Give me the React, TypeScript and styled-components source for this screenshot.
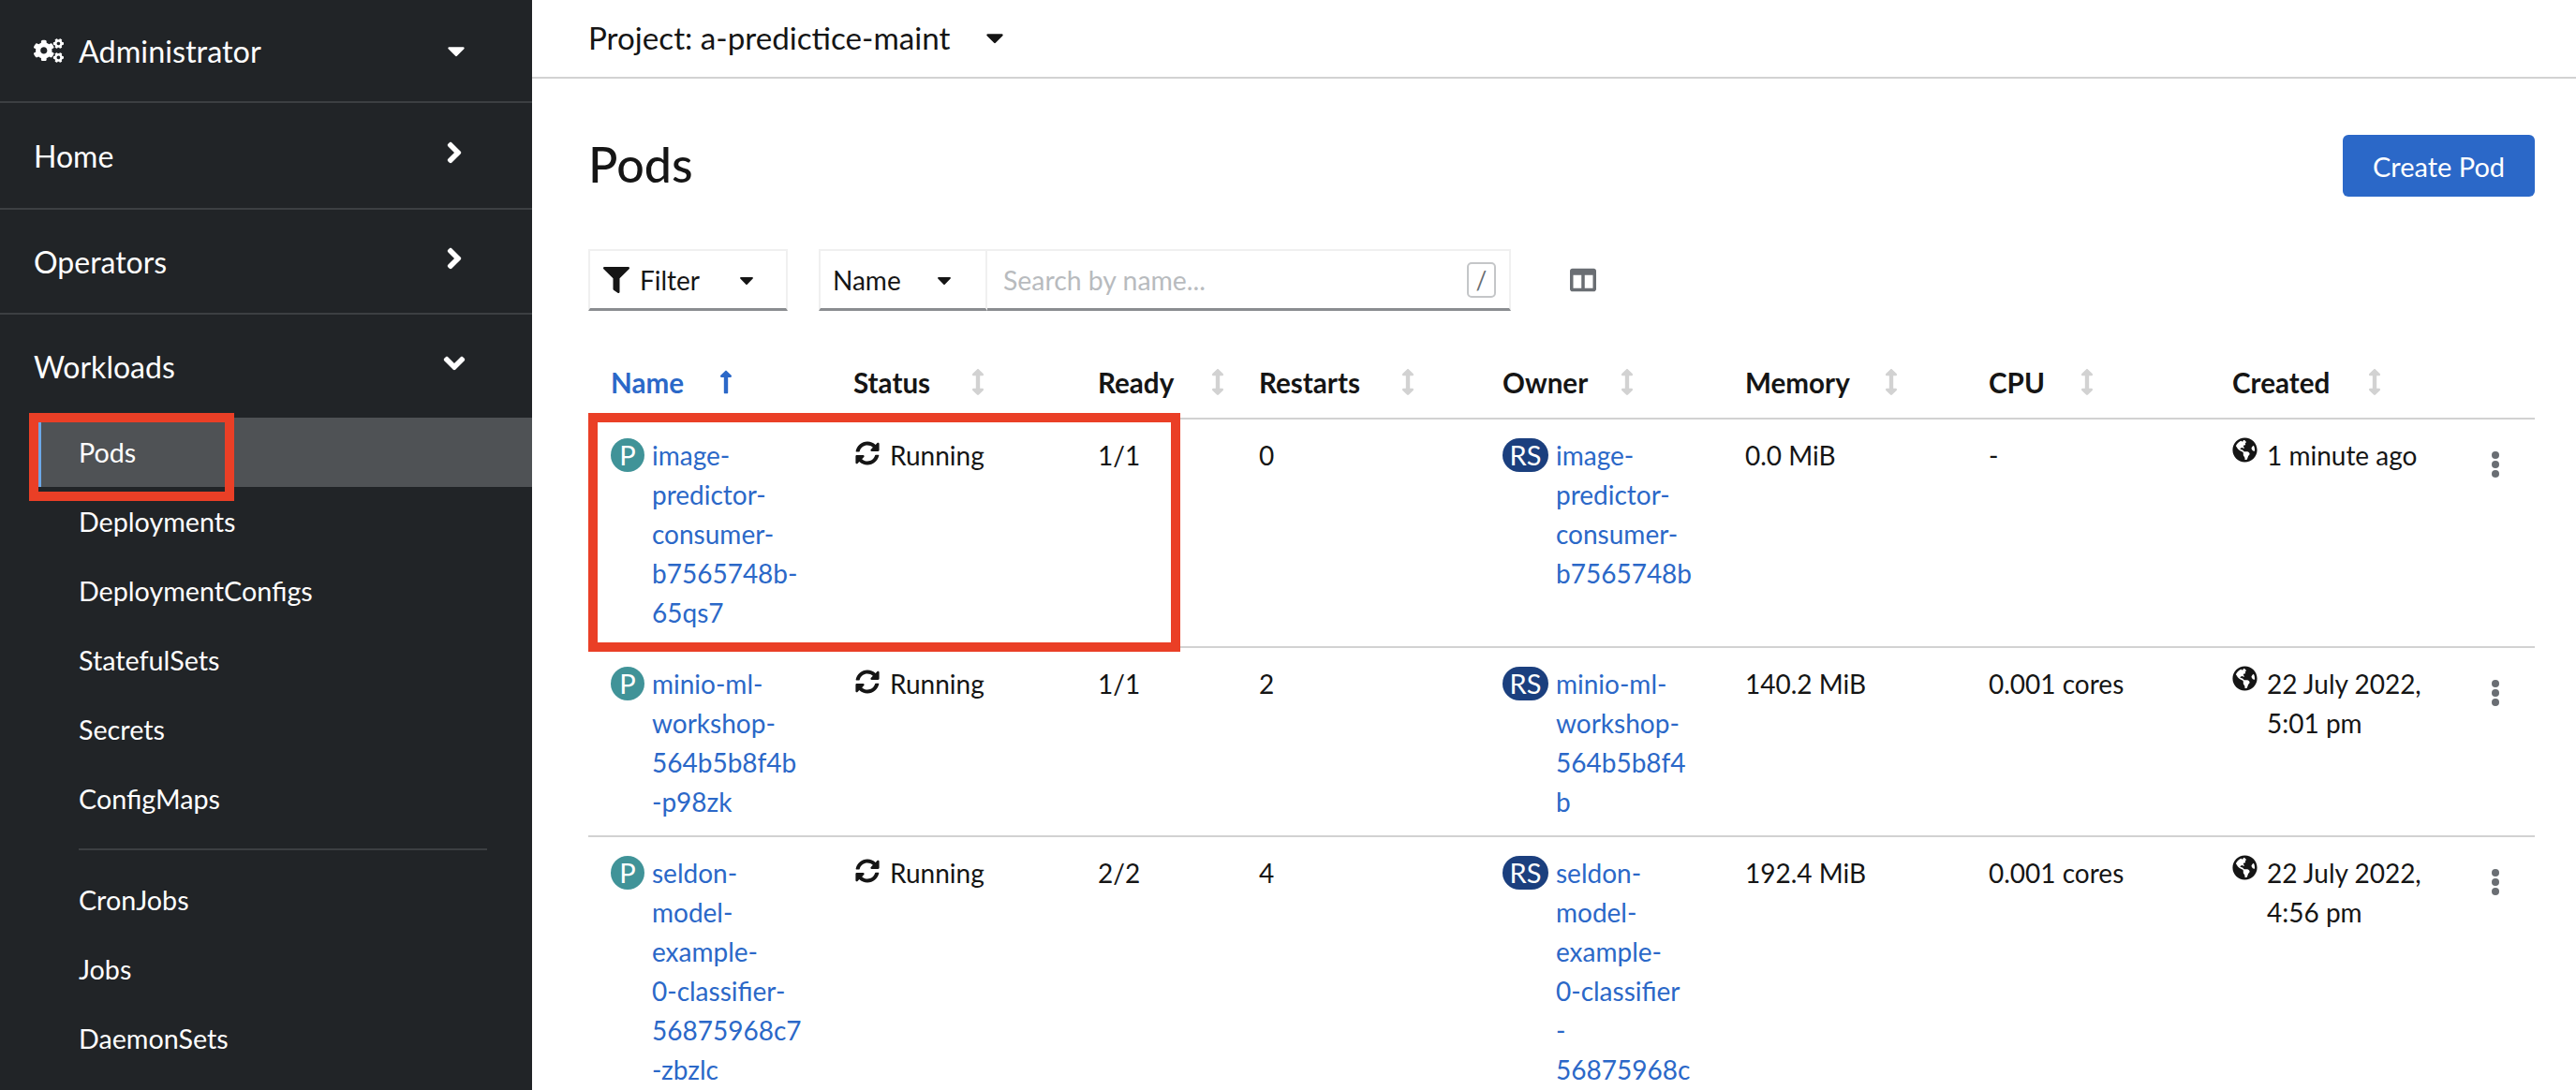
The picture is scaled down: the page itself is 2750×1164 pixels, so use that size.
import React from "react";
import styled, { createGlobalStyle } from "styled-components";
import {
  FaCogs, FaCaretDown, FaAngleRight, FaAngleDown, FaFilter, FaColumns,
  FaArrowsAltV, FaLongArrowAltUp, FaSyncAlt, FaGlobeAmericas,
} from "react-icons/fa";

const Global = createGlobalStyle`
  html, body { margin: 0; padding: 0; background: #fff; }
  body { font-family: "Lato", "Liberation Sans", sans-serif; color: #151515; }
  * { box-sizing: border-box; }
`;

const Page = styled.div`
  position: relative;
  width: 2750px;
  height: 1164px;
  overflow: hidden;
  display: flex;
`;

const Sidebar = styled.nav`
  width: 568px;
  flex: none;
  background: #212427;
  color: #fff;
  font-size: 32px;
`;

const NavTop = styled.div<{ $h: number }>`
  height: ${(p) => p.$h}px;
  display: flex;
  align-items: center;
  justify-content: space-between;
  padding: 0 71px 0 36px;
  border-bottom: 2px solid #3c3f42;
`;

const NavPlain = styled(NavTop)`
  border-bottom: none;
`;

const AdminLabel = styled.span`
  display: flex;
  align-items: center;
  gap: 16px;
  font-size: 32.4px;
`;

const ChevronBox = styled.span`
  display: flex;
  width: 24px;
  justify-content: center;
  margin-top: -6px;
  font-size: 36px;
`;

const CaretBox = styled.span`
  display: flex;
  width: 24px;
  justify-content: center;
  margin-right: -2px;
  font-size: 30px;
`;

const SubList = styled.div`
  display: flex;
  flex-direction: column;
`;

const SubItem = styled.div<{ $active?: boolean }>`
  height: 74px;
  margin-left: 41px;
  padding-left: 40px;
  display: flex;
  align-items: center;
  font-size: 28.7px;
  background: ${(p) => (p.$active ? "#4f5255" : "transparent")};
  border-left: 3px solid ${(p) => (p.$active ? "#6ca8e8" : "transparent")};
`;

const SubDivider = styled.div`
  height: 2px;
  margin: 16px 48px 16px 84px;
  background: #3c3f42;
`;

const Main = styled.main`
  flex: 1;
  min-width: 0;
`;

const ProjectBar = styled.header`
  height: 84px;
  border-bottom: 2px solid #d2d2d2;
  padding: 0 0 2px 60px;
  display: flex;
  align-items: center;
  gap: 33px;
  font-size: 33.2px;
`;

const ProjectCaret = styled.span`
  display: flex;
  font-size: 30px;
`;

const Content = styled.div`
  padding: 0 44px 0 60px;
`;

const TitleRow = styled.div`
  height: 66px;
  margin-top: 60px;
  display: flex;
  align-items: center;
  justify-content: space-between;
`;

const Title = styled.h1`
  margin: -4px 0 0;
  font-size: 52px;
  font-weight: 500;
`;

const CreateButton = styled.button`
  width: 205px;
  height: 66px;
  border: none;
  border-radius: 6px;
  background: #2b68c8;
  color: #fff;
  font: inherit;
  font-size: 29px;
`;

const Toolbar = styled.div`
  margin-top: 56px;
  display: flex;
  align-items: center;
`;

const FieldBox = styled.div<{ $w: number; $noLeft?: boolean }>`
  width: ${(p) => p.$w}px;
  height: 66px;
  display: flex;
  align-items: center;
  font-size: 28px;
  border: 2px solid #f0f0f0;
  border-bottom: 3px solid #8a8d90;
  ${(p) => (p.$noLeft ? "border-left: none;" : "")}
`;

const FilterBox = styled(FieldBox)`
  padding-left: 14px;
  margin-right: 33px;
`;

const FilterLabel = styled.span`
  margin-left: 11px;
  width: 102px;
`;

const NameLabel = styled.span`
  margin-left: 13px;
  width: 107px;
`;

const SmallCaret = styled.span`
  display: flex;
  font-size: 24px;
`;

const SearchBox = styled(FieldBox)`
  padding: 0 14px 0 17px;
  justify-content: space-between;
  font-size: 28.4px;
`;

const Placeholder = styled.span`
  color: #b8bbbe;
`;

const SlashKey = styled.span`
  width: 31px;
  height: 38px;
  border: 2px solid #c4c6c8;
  border-radius: 5px;
  display: flex;
  align-items: center;
  justify-content: center;
  color: #6a6e73;
  font-size: 26px;
`;

const ColumnsIcon = styled.span`
  display: flex;
  margin-left: 63px;
  color: #6a6e73;
  font-size: 28px;
`;

const Grid = styled.div`
  display: grid;
  grid-template-columns: 259px 261px 172px 260px 259px 260px 260px 260px 1fr;
  padding-left: 24px;
`;

const HeaderRow = styled(Grid)`
  margin-top: 42px;
  height: 74px;
  border-bottom: 2px solid #d2d2d2;
  align-items: center;
  padding-bottom: 4px;
  font-size: 29.6px;
  font-weight: 700;
`;

const HeaderCell = styled.div<{ $active?: boolean }>`
  display: flex;
  align-items: center;
  color: ${(p) => (p.$active ? "#2b68c8" : "#151515")};
`;

const HeaderLabel = styled.span<{ $w: number }>`
  width: ${(p) => p.$w}px;
`;

const SortIcon = styled.span<{ $active?: boolean }>`
  display: flex;
  color: ${(p) => (p.$active ? "#2b68c8" : "#d2d2d2")};
  font-size: 28px;
`;

const Row = styled(Grid)`
  padding-top: 17px;
  padding-bottom: 15px;
  border-bottom: 2px solid #d2d2d2;
  font-size: 28px;
  line-height: 42px;
`;

const ResourceCell = styled.div`
  display: flex;
  align-items: flex-start;
  gap: 8px;
`;

const Badge = styled.span<{ $bg: string; $wide?: boolean }>`
  flex: none;
  width: ${(p) => (p.$wide ? 49 : 36)}px;
  height: 36px;
  margin-top: 3px;
  border-radius: 18px;
  background: ${(p) => p.$bg};
  color: #fff;
  font-size: 29px;
  line-height: 36px;
  text-align: center;
`;

const LinkText = styled.a`
  color: #2b68c8;
  white-space: nowrap;
`;

const LinkLine = styled.span`
  display: block;
`;

const StatusCell = styled.div`
  display: flex;
  align-items: flex-start;
  gap: 11px;
`;

const StatusIcon = styled.span`
  display: flex;
  margin-top: 6px;
  font-size: 26px;
  padding-left: 2px;
`;

const CreatedCell = styled.div`
  display: flex;
  align-items: flex-start;
  gap: 10px;
`;

const GlobeIcon = styled.span`
  display: flex;
  margin-top: 2px;
  font-size: 27px;
`;

const CreatedText = styled.span`
  white-space: nowrap;
`;

const KebabCell = styled.div`
  display: flex;
  flex-direction: column;
  align-items: center;
  gap: 2px;
  width: 8px;
  margin: 17px 0 0 17px;
`;

const KebabDot = styled.span`
  width: 8px;
  height: 8px;
  border-radius: 50%;
  background: #6a6e73;
`;

const Callout = styled.div<{ $x: number; $y: number; $w: number; $h: number }>`
  position: absolute;
  left: ${(p) => p.$x}px;
  top: ${(p) => p.$y}px;
  width: ${(p) => p.$w}px;
  height: ${(p) => p.$h}px;
  border: 10px solid #ea3f26;
`;

const columns = [
  { label: "Name", w: 109, active: true },
  { label: "Status", w: 119 },
  { label: "Ready", w: 114 },
  { label: "Restarts", w: 145 },
  { label: "Owner", w: 119 },
  { label: "Memory", w: 142 },
  { label: "CPU", w: 91 },
  { label: "Created", w: 138 },
];

const rows = [
  {
    name: ["image-", "predictor-", "consumer-", "b7565748b-", "65qs7"],
    ready: "1/1", restarts: "0",
    owner: ["image-", "predictor-", "consumer-", "b7565748b"],
    memory: "0.0 MiB", cpu: "-", created: ["1 minute ago"],
  },
  {
    name: ["minio-ml-", "workshop-", "564b5b8f4b", "-p98zk"],
    ready: "1/1", restarts: "2",
    owner: ["minio-ml-", "workshop-", "564b5b8f4", "b"],
    memory: "140.2 MiB", cpu: "0.001 cores", created: ["22 July 2022,", "5:01 pm"],
  },
  {
    name: ["seldon-", "model-", "example-", "0-classifier-", "56875968c7", "-zbzlc"],
    ready: "2/2", restarts: "4",
    owner: ["seldon-", "model-", "example-", "0-classifier", "-", "56875968c"],
    memory: "192.4 MiB", cpu: "0.001 cores", created: ["22 July 2022,", "4:56 pm"],
  },
];

const Lines = ({ lines }: { lines: string[] }) => (
  <LinkText>
    {lines.map((l, i) => (
      <LinkLine key={i}>{l}</LinkLine>
    ))}
  </LinkText>
);

export default function App() {
  return (
    <Page>
      <Global />
      <Sidebar>
        <NavTop $h={110}>
          <AdminLabel>
            <FaCogs size={32} />
            Administrator
          </AdminLabel>
          <CaretBox><FaCaretDown /></CaretBox>
        </NavTop>
        <NavTop $h={114}>
          Home
          <ChevronBox><FaAngleRight /></ChevronBox>
        </NavTop>
        <NavTop $h={112}>
          Operators
          <ChevronBox><FaAngleRight /></ChevronBox>
        </NavTop>
        <NavPlain $h={110}>
          Workloads
          <ChevronBox><FaAngleDown /></ChevronBox>
        </NavPlain>
        <SubList>
          <SubItem $active>Pods</SubItem>
          <SubItem>Deployments</SubItem>
          <SubItem>DeploymentConfigs</SubItem>
          <SubItem>StatefulSets</SubItem>
          <SubItem>Secrets</SubItem>
          <SubItem>ConfigMaps</SubItem>
          <SubDivider />
          <SubItem>CronJobs</SubItem>
          <SubItem>Jobs</SubItem>
          <SubItem>DaemonSets</SubItem>
        </SubList>
      </Sidebar>
      <Main>
        <ProjectBar>
          Project: a-predictice-maint
          <ProjectCaret><FaCaretDown /></ProjectCaret>
        </ProjectBar>
        <Content>
          <TitleRow>
            <Title>Pods</Title>
            <CreateButton>Create Pod</CreateButton>
          </TitleRow>
          <Toolbar>
            <FilterBox $w={213}>
              <FaFilter size={28} />
              <FilterLabel>Filter</FilterLabel>
              <SmallCaret><FaCaretDown /></SmallCaret>
            </FilterBox>
            <FieldBox $w={180}>
              <NameLabel>Name</NameLabel>
              <SmallCaret><FaCaretDown /></SmallCaret>
            </FieldBox>
            <SearchBox $w={559} $noLeft>
              <Placeholder>Search by name...</Placeholder>
              <SlashKey>/</SlashKey>
            </SearchBox>
            <ColumnsIcon><FaColumns /></ColumnsIcon>
          </Toolbar>
          <HeaderRow>
            {columns.map((c) => (
              <HeaderCell key={c.label} $active={c.active}>
                <HeaderLabel $w={c.w}>{c.label}</HeaderLabel>
                <SortIcon $active={c.active}>
                  {c.active ? <FaLongArrowAltUp /> : <FaArrowsAltV />}
                </SortIcon>
              </HeaderCell>
            ))}
          </HeaderRow>
          {rows.map((r, i) => (
            <Row key={i}>
              <ResourceCell>
                <Badge $bg="#409398">P</Badge>
                <Lines lines={r.name} />
              </ResourceCell>
              <StatusCell>
                <StatusIcon><FaSyncAlt /></StatusIcon>
                Running
              </StatusCell>
              <div>{r.ready}</div>
              <div>{r.restarts}</div>
              <ResourceCell>
                <Badge $bg="#1b3f7e" $wide>RS</Badge>
                <Lines lines={r.owner} />
              </ResourceCell>
              <div>{r.memory}</div>
              <div>{r.cpu}</div>
              <CreatedCell>
                <GlobeIcon><FaGlobeAmericas /></GlobeIcon>
                <CreatedText>
                  {r.created.map((l, j) => (
                    <LinkLine key={j}>{l}</LinkLine>
                  ))}
                </CreatedText>
              </CreatedCell>
              <KebabCell>
                <KebabDot />
                <KebabDot />
                <KebabDot />
              </KebabCell>
            </Row>
          ))}
        </Content>
      </Main>
      <Callout $x={31} $y={441} $w={219} $h={94} />
      <Callout $x={628} $y={441} $w={632} $h={255} />
    </Page>
  );
}
